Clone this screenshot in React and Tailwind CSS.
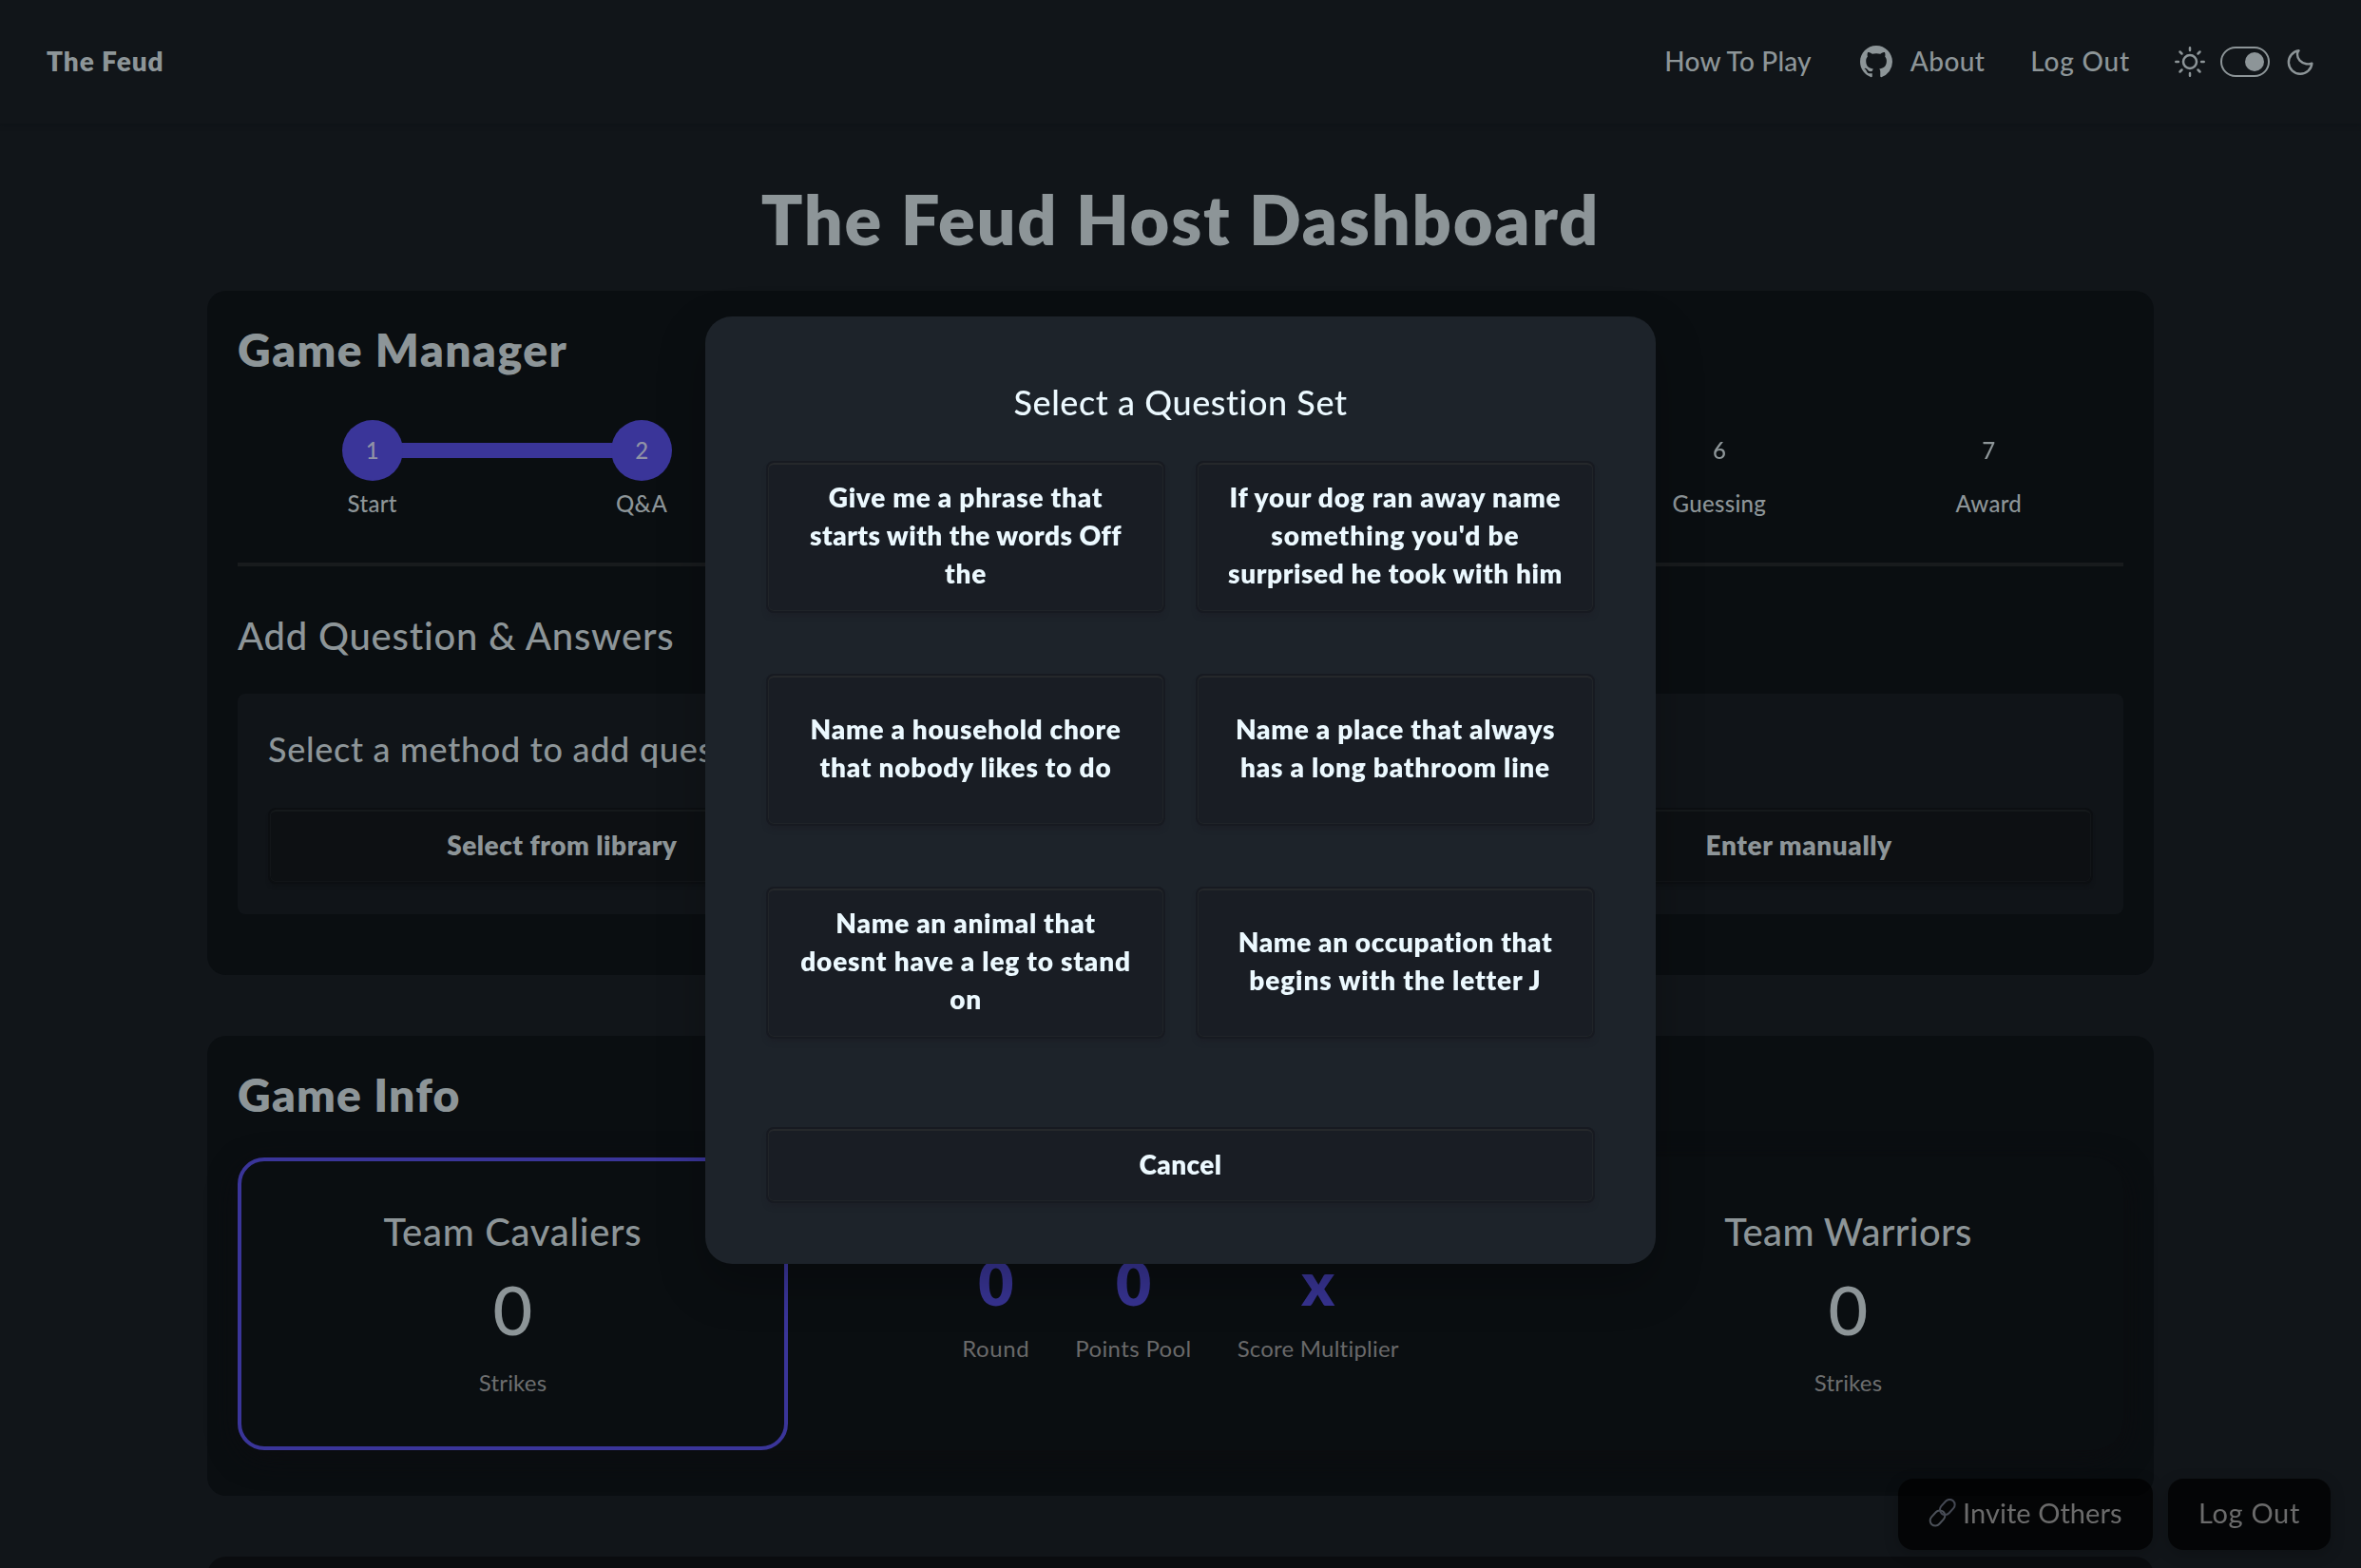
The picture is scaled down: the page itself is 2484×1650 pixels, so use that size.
import React from "react";

const steps = [
  { n: 1, label: "Start", done: true },
  { n: 2, label: "Q&A", done: true },
  { n: 6, label: "Guessing", col: "col-start-6" },
  { n: 7, label: "Award" },
];

const questionSets = [
  [
    ["Give me a phrase that", "tracking-[0.74px]"],
    ["starts with the words Off", "tracking-[0.46px]"],
    ["the", "tracking-[0.7px]"],
  ],
  [
    ["If your dog ran away name", "tracking-[0.78px]"],
    ["something you'd be", "tracking-[0.95px]"],
    ["surprised he took with him", "tracking-[0.59px]"],
  ],
  [
    ["Name a household chore", "tracking-[0.7px]"],
    ["that nobody likes to do", "tracking-[0.77px]"],
  ],
  [
    ["Name a place that always", "tracking-[0.72px]"],
    ["has a long bathroom line", "tracking-[0.77px]"],
  ],
  [
    ["Name an animal that", "tracking-[0.7px]"],
    ["doesnt have a leg to stand", "tracking-[0.79px]"],
    ["on", "tracking-[0.7px]"],
  ],
  [
    ["Name an occupation that", "tracking-[0.62px]"],
    ["begins with the letter J", "tracking-[0.87px]"],
  ],
];

function GithubIcon() {
  return (
    <svg viewBox="0 0 16 16" className="h-[34px] w-[34px]" fill="currentColor">
      <path d="M8 0C3.58 0 0 3.58 0 8c0 3.54 2.29 6.53 5.47 7.59.4.07.55-.17.55-.38 0-.19-.01-.82-.01-1.49-2.01.37-2.53-.49-2.69-.94-.09-.23-.48-.94-.82-1.13-.28-.15-.68-.52-.01-.53.63-.01 1.08.58 1.23.82.72 1.21 1.87.87 2.33.66.07-.52.28-.87.51-1.07-1.78-.2-3.64-.89-3.64-3.95 0-.87.31-1.59.82-2.15-.08-.2-.36-1.02.08-2.12 0 0 .67-.21 2.2.82.64-.18 1.32-.27 2-.27s1.36.09 2 .27c1.53-1.04 2.2-.82 2.2-.82.44 1.1.16 1.92.08 2.12.51.56.82 1.27.82 2.15 0 3.07-1.87 3.75-3.65 3.95.29.25.54.73.54 1.48 0 1.07-.01 1.93-.01 2.2 0 .21.15.46.55.38A8.01 8.01 0 0 0 16 8c0-4.42-3.58-8-8-8" />
    </svg>
  );
}

function SunIcon() {
  return (
    <svg viewBox="0 0 32 32" className="h-8 w-8" fill="none" stroke="currentColor" strokeWidth="2.5" strokeLinecap="round">
      <circle cx="16" cy="16" r="7" />
      <path d="M16 1.3v2.6M16 28.1v2.6M1.3 16h2.6M28.1 16h2.6M5.5 5.5l2 2M24.5 24.5l2 2M5.5 26.5l2-2M24.5 7.5l2-2" />
    </svg>
  );
}

function MoonIcon() {
  return (
    <svg viewBox="0 0 32 32" className="h-8 w-8" fill="none" stroke="currentColor" strokeWidth="2.4" strokeLinejoin="round">
      <path d="M14.6 4.3A12.3 12.3 0 1 0 28.4 17.6C26.6 18.3 24.6 18.6 22.4 18.2C16.6 17.2 13 13 13 8.3C13 6.8 13.6 5.4 14.6 4.3Z" />
    </svg>
  );
}

function LinkIcon() {
  return (
    <svg viewBox="0 0 30 30" className="h-[30px] w-[30px]" fill="none" strokeWidth="2">
      <g transform="rotate(-48 9.5 20.5)">
        <rect x="0.5" y="15" width="18" height="11" rx="5.5" stroke="#4b5058" />
      </g>
      <g transform="rotate(-48 19.8 9)">
        <rect x="10.8" y="3.5" width="18" height="11" rx="5.5" stroke="#444853" />
      </g>
    </svg>
  );
}

function DimButton({ children, className }) {
  return (
    <button
      className={`h-20 rounded-lg border-2 border-[#0c0f12] bg-[#0d1013] pb-[3px] text-[28px] leading-10 font-extrabold shadow-[inset_0_2px_0_#15191b,inset_0_0_0_1px_#121518,0_4px_4px_-2px_#0e1114] ${className}`}
    >
      {children}
    </button>
  );
}

function ModalButton({ lines, className }) {
  return (
    <button
      className={`flex flex-col items-center justify-center rounded-lg border-2 border-[#171a21] bg-[#191d24] text-[28px] leading-10 font-extrabold whitespace-nowrap shadow-[inset_0_2px_0_#25282b,inset_0_0_0_1px_#202428,0_5px_6px_-3px_#1c1e26] ${className}`}
    >
      {lines.map(([text, tracking]) => (
        <span key={text} className={tracking}>
          {text}
        </span>
      ))}
    </button>
  );
}

function Team({ name, active, tracking }) {
  return (
    <div
      className={`flex h-[308px] w-[579px] flex-col items-center rounded-[28px] border-4 pt-[54px] ${
        active ? "border-[#3a3599]" : "border-transparent"
      }`}
    >
      <div className={`text-[40px] leading-10 font-medium ${tracking}`}>{name}</div>
      <div className="mt-[25px] text-7xl leading-[72px] font-medium">0</div>
      <div className="mt-[30px] text-2xl leading-6 tracking-[0.2px] text-[#6d6e6f]">Strikes</div>
    </div>
  );
}

function Stat({ value, label, tracking }) {
  return (
    <div className="flex flex-col items-center">
      <div className="text-[64px] leading-[64px] font-extrabold text-[#373391]">{value}</div>
      <div className={`mt-[25px] text-2xl leading-6 text-[#69696a] ${tracking}`}>{label}</div>
    </div>
  );
}

export default function App() {
  return (
    <div className="h-[1650px] w-full overflow-hidden bg-[#111519] font-['Lato',sans-serif] text-[#8d9598]">
      <header className="flex h-[130px] items-center justify-between px-12 text-[28px] leading-8 shadow-[0_2px_4px_#0f1317]">
        <div className="pb-[2px] pl-px font-extrabold tracking-[0.95px]">The Feud</div>
        <nav className="flex items-center font-medium">
          <span className="pb-[2px] tracking-[0.2px]">How To Play</span>
          <span className="ml-[51px] flex items-center gap-[19px]">
            <GithubIcon />
            <span className="pb-[2px] tracking-[0.4px]">About</span>
          </span>
          <span className="ml-[48px] pb-[2px] tracking-[0.8px]">Log Out</span>
          <div className="ml-[47px] flex items-center gap-4">
            <SunIcon />
            <div className="flex h-8 w-[52px] items-center justify-end rounded-full border-2 border-[#8d9598] pr-1">
              <div className="h-5 w-5 rounded-full bg-[#8d9598]" />
            </div>
            <MoonIcon />
          </div>
        </nav>
      </header>

      <h1 className="mt-16 text-center text-7xl leading-[72px] font-extrabold tracking-[1.8px]">
        The Feud Host Dashboard
      </h1>

      <main className="mx-auto mt-10 flex w-[2048px] flex-col gap-16">
        <section className="h-[720px] rounded-[20px] bg-[#0a0e11] px-8 pt-[38px]">
          <h2 className="text-5xl leading-[48px] font-extrabold tracking-[1.5px]">Game Manager</h2>

          <div className="mt-[50px] grid grid-cols-7 text-2xl leading-6 font-medium">
            {steps.map((s, i) => (
              <div key={s.n} className={`relative flex flex-col items-center ${s.col ?? ""}`}>
                {i === 1 && <div className="absolute top-6 right-1/2 h-4 w-full bg-[#3a3599]" />}
                <div
                  className={`relative z-10 flex h-16 w-16 items-center justify-center rounded-full pb-px ${
                    s.done ? "bg-[#3a3599] text-[#9092a6]" : ""
                  }`}
                >
                  {s.n}
                </div>
                <div className="mt-3 tracking-[0.3px]">{s.label}</div>
              </div>
            ))}
          </div>

          <div className="mt-[50px] h-1 bg-[#181b1d]" />

          <h3 className="mt-[53px] text-[40px] leading-10 font-medium tracking-[0.76px]">Add Question &amp; Answers</h3>

          <div className="mt-[41px] h-[232px] rounded-lg bg-[#101418] px-8 pt-10">
            <p className="text-4xl leading-9 font-medium tracking-[0.72px]">Select a method to add questions</p>
            <div className="mt-11 grid grid-cols-3 gap-8">
              <DimButton className="tracking-[0.5px]">Select from library</DimButton>
              <DimButton className="col-start-3 tracking-[0.57px]">Enter manually</DimButton>
            </div>
          </div>
        </section>

        <section className="h-[484px] rounded-[20px] bg-[#0a0e11] px-8 pt-[38px]">
          <h2 className="text-5xl leading-[48px] font-extrabold tracking-[1.2px]">Game Info</h2>
          <div className="mt-[42px] flex justify-between rounded-[32px] shadow-[0_8px_30px_#0c0d10]">
            <Team name="Team Cavaliers" active tracking="tracking-[0.7px]" />
            <div className="flex gap-12 pt-[100px]">
              <Stat value="0" label="Round" tracking="tracking-[0.6px]" />
              <Stat value="0" label="Points Pool" tracking="tracking-[0.38px]" />
              <Stat value="x" label="Score Multiplier" tracking="tracking-[0.22px]" />
            </div>
            <Team name="Team Warriors" tracking="tracking-[0.35px]" />
          </div>
        </section>

        <section className="h-40 rounded-[20px] bg-[#0a0c0f]" />
      </main>

      <div className="fixed right-8 bottom-[19px] flex gap-4 text-[29px] leading-8 text-[#6b6b6b]">
        <button className="flex h-[75px] w-[268px] items-center rounded-2xl bg-black/75 pb-[3px] pl-8 shadow-[0_4px_16px_rgba(0,0,0,0.2)]">
          <LinkIcon />
          <span className="ml-[6px] tracking-[0.06px]">Invite Others</span>
        </button>
        <button className="h-[75px] w-[171px] rounded-2xl bg-black/75 pb-[3px] tracking-[0.69px] shadow-[0_4px_16px_rgba(0,0,0,0.2)]">
          Log Out
        </button>
      </div>

      <div className="fixed inset-0 flex items-start justify-center pt-[333px]">
        <div className="flex h-[997px] w-[1000px] flex-col rounded-[28px] bg-[#1d232a] px-16 pt-[72px] text-[#ecf9ff] shadow-[0_20px_50px_rgba(0,0,0,0.25)]">
          <h3 className="text-center text-4xl leading-9 font-medium tracking-[0.57px]">Select a Question Set</h3>
          <div className="mt-11 grid grid-cols-2 gap-x-8 gap-y-16">
            {questionSets.map((lines) => (
              <ModalButton key={lines[0][0]} lines={lines} className="h-40 pb-[5px]" />
            ))}
          </div>
          <ModalButton lines={[["Cancel", "tracking-[0.4px]"]]} className="mt-[93px] h-20 pb-[3px]" />
        </div>
      </div>
    </div>
  );
}
